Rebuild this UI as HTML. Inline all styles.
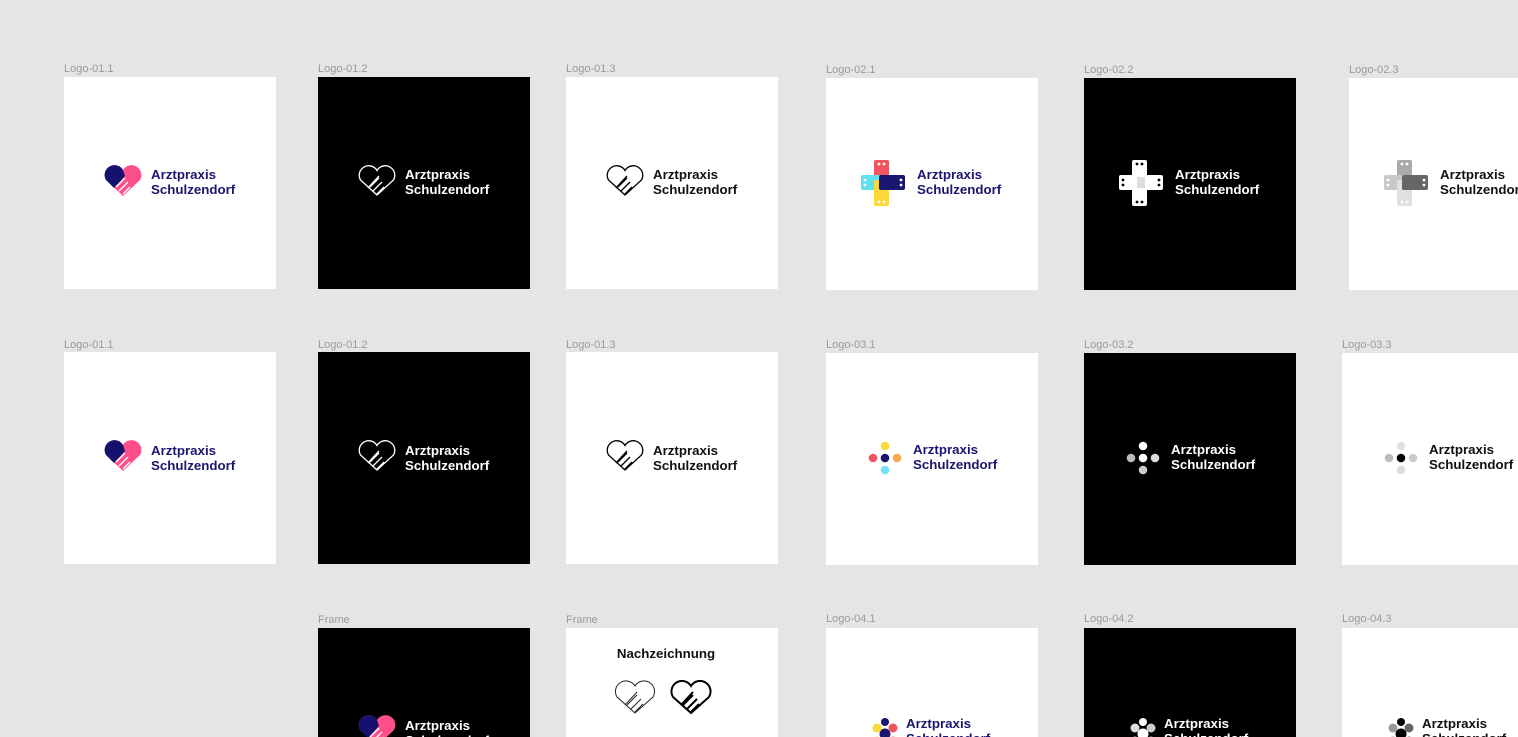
<!DOCTYPE html>
<html><head><meta charset="utf-8"><style>
html,body{margin:0;width:1518px;height:737px;overflow:hidden}
body{background:#e5e5e5;position:relative;font-family:"Liberation Sans",sans-serif}
.c{position:absolute;width:212px;height:212px;background:#fff}
.k{background:#000}
.l{position:absolute;font-size:11px;color:#9a9a9a}
.t{position:absolute;font-weight:bold;font-size:13.3px;line-height:15px;color:#1a1670}
.k .t{color:#fff}
.w .t,.g .t{color:#111}
.i{position:absolute}
</style></head><body>

<div class="l" style="left:64px;top:63px">Logo-01.1</div>
<div class="l" style="left:318px;top:63px">Logo-01.2</div>
<div class="l" style="left:566px;top:63px">Logo-01.3</div>
<div class="l" style="left:826px;top:64px">Logo-02.1</div>
<div class="l" style="left:1084px;top:64px">Logo-02.2</div>
<div class="l" style="left:1349px;top:64px">Logo-02.3</div>

<div class="c" style="left:64px;top:77px">
<svg class="i" style="left:39px;top:88px" width="40" height="32" viewBox="0 0 40 32"><path d="M20 31 L3 15 A8.5 8.5 0 0 1 20 5 A8.5 8.5 0 0 1 37 15 Z" fill="#ff4f8b"/><path d="M20 5 A8.5 8.5 0 0 0 3 15 L11 23 L22 11 Z" fill="#14126e"/><path d="M13 22 l9-9 M16 26 l9-9 M20 29 l7-7" stroke="#fff" stroke-width="1.4"/></svg>
<div class="t" style="left:87px;top:90px">Arztpraxis<br>Schulzendorf</div></div>

<div class="c k" style="left:318px;top:77px">
<svg class="i" style="left:39px;top:88px" width="40" height="32" viewBox="0 0 40 32"><path d="M20 30 L3.5 15 A8.3 8.3 0 0 1 20 5.5 A8.3 8.3 0 0 1 36.5 15 Z M11 23 L22 11 M13 22 l9-9 M16 26 l9-9 M20 29 l7-7" fill="none" stroke="#fff" stroke-width="1.3"/></svg>
<div class="t" style="left:87px;top:90px">Arztpraxis<br>Schulzendorf</div></div>

<div class="c w" style="left:566px;top:77px">
<svg class="i" style="left:39px;top:88px" width="40" height="32" viewBox="0 0 40 32"><path d="M20 30 L3.5 15 A8.3 8.3 0 0 1 20 5.5 A8.3 8.3 0 0 1 36.5 15 Z M11 23 L22 11 M13 22 l9-9 M16 26 l9-9 M20 29 l7-7" fill="none" stroke="#000" stroke-width="1.3"/></svg>
<div class="t" style="left:87px;top:90px">Arztpraxis<br>Schulzendorf</div></div>

<div class="c" style="left:826px;top:78px">
<svg class="i" style="left:35px;top:82px" width="44" height="46" viewBox="0 0 44 46"><rect x="13" y="0" width="15" height="26" rx="2" fill="#f0545f"/><rect x="0" y="15" width="26" height="15" rx="2" fill="#5ee0ee"/><rect x="13" y="20" width="15" height="26" rx="2" fill="#fbd93a"/><rect x="18" y="15" width="26" height="15" rx="2" fill="#1a1670"/><g fill="#fff"><circle cx="18" cy="4" r="1.4"/><circle cx="23" cy="4" r="1.4"/><circle cx="18" cy="42" r="1.4"/><circle cx="23" cy="42" r="1.4"/><circle cx="4" cy="20" r="1.4"/><circle cx="4" cy="25" r="1.4"/><circle cx="40" cy="20" r="1.4"/><circle cx="40" cy="25" r="1.4"/></g></svg>
<div class="t" style="left:91px;top:89px">Arztpraxis<br>Schulzendorf</div></div>

<div class="c k" style="left:1084px;top:78px">
<svg class="i" style="left:35px;top:82px" width="44" height="46" viewBox="0 0 44 46"><rect x="13" y="0" width="15" height="46" rx="2" fill="#fff"/><rect x="0" y="15" width="44" height="15" rx="2" fill="#fff"/><rect x="18" y="17" width="8" height="11" fill="#ddd"/><g fill="#000"><circle cx="18" cy="4" r="1.4"/><circle cx="23" cy="4" r="1.4"/><circle cx="18" cy="42" r="1.4"/><circle cx="23" cy="42" r="1.4"/><circle cx="4" cy="20" r="1.4"/><circle cx="4" cy="25" r="1.4"/><circle cx="40" cy="20" r="1.4"/><circle cx="40" cy="25" r="1.4"/></g></svg>
<div class="t" style="left:91px;top:89px">Arztpraxis<br>Schulzendorf</div></div>

<div class="c g" style="left:1349px;top:78px">
<svg class="i" style="left:35px;top:82px" width="44" height="46" viewBox="0 0 44 46"><rect x="13" y="0" width="15" height="26" rx="2" fill="#aaa"/><rect x="0" y="15" width="26" height="15" rx="2" fill="#c8c8c8"/><rect x="13" y="20" width="15" height="26" rx="2" fill="#e0e0e0"/><rect x="18" y="15" width="26" height="15" rx="2" fill="#666"/><g fill="#fff"><circle cx="18" cy="4" r="1.4"/><circle cx="23" cy="4" r="1.4"/><circle cx="18" cy="42" r="1.4"/><circle cx="23" cy="42" r="1.4"/><circle cx="4" cy="20" r="1.4"/><circle cx="4" cy="25" r="1.4"/><circle cx="40" cy="20" r="1.4"/><circle cx="40" cy="25" r="1.4"/></g></svg>
<div class="t" style="left:91px;top:89px">Arztpraxis<br>Schulzendorf</div></div>

<div class="l" style="left:64px;top:339px">Logo-01.1</div>
<div class="l" style="left:318px;top:339px">Logo-01.2</div>
<div class="l" style="left:566px;top:339px">Logo-01.3</div>
<div class="l" style="left:826px;top:339px">Logo-03.1</div>
<div class="l" style="left:1084px;top:339px">Logo-03.2</div>
<div class="l" style="left:1342px;top:339px">Logo-03.3</div>

<div class="c" style="left:64px;top:352px">
<svg class="i" style="left:39px;top:88px" width="40" height="32" viewBox="0 0 40 32"><path d="M20 31 L3 15 A8.5 8.5 0 0 1 20 5 A8.5 8.5 0 0 1 37 15 Z" fill="#ff4f8b"/><path d="M20 5 A8.5 8.5 0 0 0 3 15 L11 23 L22 11 Z" fill="#14126e"/><path d="M13 22 l9-9 M16 26 l9-9 M20 29 l7-7" stroke="#fff" stroke-width="1.4"/></svg>
<div class="t" style="left:87px;top:91px">Arztpraxis<br>Schulzendorf</div></div>

<div class="c k" style="left:318px;top:352px">
<svg class="i" style="left:39px;top:88px" width="40" height="32" viewBox="0 0 40 32"><path d="M20 30 L3.5 15 A8.3 8.3 0 0 1 20 5.5 A8.3 8.3 0 0 1 36.5 15 Z M11 23 L22 11 M13 22 l9-9 M16 26 l9-9 M20 29 l7-7" fill="none" stroke="#fff" stroke-width="1.3"/></svg>
<div class="t" style="left:87px;top:91px">Arztpraxis<br>Schulzendorf</div></div>

<div class="c w" style="left:566px;top:352px">
<svg class="i" style="left:39px;top:88px" width="40" height="32" viewBox="0 0 40 32"><path d="M20 30 L3.5 15 A8.3 8.3 0 0 1 20 5.5 A8.3 8.3 0 0 1 36.5 15 Z M11 23 L22 11 M13 22 l9-9 M16 26 l9-9 M20 29 l7-7" fill="none" stroke="#000" stroke-width="1.3"/></svg>
<div class="t" style="left:87px;top:91px">Arztpraxis<br>Schulzendorf</div></div>

<div class="c" style="left:826px;top:353px">
<svg class="i" style="left:42px;top:88px" width="34" height="34" viewBox="0 0 34 34"><circle cx="17" cy="5" r="4.3" fill="#fbd93a"/><circle cx="5" cy="17" r="4.3" fill="#f0545f"/><circle cx="17" cy="17" r="4.3" fill="#1a1670"/><circle cx="29" cy="17" r="4.3" fill="#f9a94b"/><circle cx="17" cy="29" r="4.3" fill="#6fe6f3"/></svg>
<div class="t" style="left:87px;top:89px">Arztpraxis<br>Schulzendorf</div></div>

<div class="c k" style="left:1084px;top:353px">
<svg class="i" style="left:42px;top:88px" width="34" height="34" viewBox="0 0 34 34"><circle cx="17" cy="5" r="4.3" fill="#fff"/><circle cx="5" cy="17" r="4.3" fill="#bbb"/><circle cx="17" cy="17" r="4.3" fill="#fff"/><circle cx="29" cy="17" r="4.3" fill="#ddd"/><circle cx="17" cy="29" r="4.3" fill="#ccc"/></svg>
<div class="t" style="left:87px;top:89px">Arztpraxis<br>Schulzendorf</div></div>

<div class="c g" style="left:1342px;top:353px">
<svg class="i" style="left:42px;top:88px" width="34" height="34" viewBox="0 0 34 34"><circle cx="17" cy="5" r="4.3" fill="#e2e2e2"/><circle cx="5" cy="17" r="4.3" fill="#bbb"/><circle cx="17" cy="17" r="4.3" fill="#000"/><circle cx="29" cy="17" r="4.3" fill="#ccc"/><circle cx="17" cy="29" r="4.3" fill="#ddd"/></svg>
<div class="t" style="left:87px;top:89px">Arztpraxis<br>Schulzendorf</div></div>

<div class="l" style="left:318px;top:614px">Frame</div>
<div class="l" style="left:566px;top:614px">Frame</div>
<div class="l" style="left:826px;top:613px">Logo-04.1</div>
<div class="l" style="left:1084px;top:613px">Logo-04.2</div>
<div class="l" style="left:1342px;top:613px">Logo-04.3</div>

<div class="c k" style="left:318px;top:628px">
<svg class="i" style="left:39px;top:87px" width="40" height="32" viewBox="0 0 40 32"><path d="M20 31 L3 15 A8.5 8.5 0 0 1 20 5 A8.5 8.5 0 0 1 37 15 Z" fill="#ff4f8b"/><path d="M20 5 A8.5 8.5 0 0 0 3 15 L11 23 L22 11 Z" fill="#14126e"/><path d="M13 22 l9-9 M16 26 l9-9 M20 29 l7-7" stroke="#fff" stroke-width="1.4"/></svg>
<div class="t" style="left:87px;top:90px">Arztpraxis<br>Schulzendorf</div></div>

<div class="c w" style="left:566px;top:628px">
<div class="t" style="left:0;width:200px;text-align:center;top:18px">Nachzeichnung</div>
<svg class="i" style="left:47px;top:52px" width="44" height="36" viewBox="0 0 44 36"><path d="M22 33 L4 17 A9.3 9.3 0 0 1 22 6 A9.3 9.3 0 0 1 40 17 Z M12 25 L24 12 M14 25 l10-10 M18 29 l10-10 M22 32 l8-8" fill="none" stroke="#222" stroke-width="1"/></svg>
<svg class="i" style="left:103px;top:52px" width="44" height="36" viewBox="0 0 44 36"><path d="M22 33 L4 17 A9.3 9.3 0 0 1 22 6 A9.3 9.3 0 0 1 40 17 Z M12 25 L24 12 M14 25 l10-10 M18 29 l10-10 M22 32 l8-8" fill="none" stroke="#000" stroke-width="2"/></svg>
</div>

<div class="c" style="left:826px;top:628px">
<svg class="i" style="left:46px;top:89px" width="26" height="30" viewBox="0 0 26 30"><circle cx="13" cy="5" r="4" fill="#1a1670"/><circle cx="5" cy="11" r="4.5" fill="#fbd93a"/><circle cx="21" cy="11" r="4.5" fill="#f0545f"/><circle cx="13" cy="17" r="5.5" fill="#1a1670"/><circle cx="5" cy="24" r="4.5" fill="#fbd93a"/><circle cx="21" cy="24" r="4.5" fill="#f0545f"/></svg>
<div class="t" style="left:80px;top:88px">Arztpraxis<br>Schulzendorf</div></div>

<div class="c k" style="left:1084px;top:628px">
<svg class="i" style="left:46px;top:89px" width="26" height="30" viewBox="0 0 26 30"><circle cx="13" cy="5" r="4" fill="#fff"/><circle cx="5" cy="11" r="4.5" fill="#ddd"/><circle cx="21" cy="11" r="4.5" fill="#ccc"/><circle cx="13" cy="17" r="5.5" fill="#fff"/><circle cx="5" cy="24" r="4.5" fill="#ddd"/><circle cx="21" cy="24" r="4.5" fill="#ccc"/></svg>
<div class="t" style="left:80px;top:88px">Arztpraxis<br>Schulzendorf</div></div>

<div class="c g" style="left:1342px;top:628px">
<svg class="i" style="left:46px;top:89px" width="26" height="30" viewBox="0 0 26 30"><circle cx="13" cy="5" r="4" fill="#000"/><circle cx="5" cy="11" r="4.5" fill="#999"/><circle cx="21" cy="11" r="4.5" fill="#666"/><circle cx="13" cy="17" r="5.5" fill="#000"/><circle cx="5" cy="24" r="4.5" fill="#999"/><circle cx="21" cy="24" r="4.5" fill="#666"/></svg>
<div class="t" style="left:80px;top:88px">Arztpraxis<br>Schulzendorf</div></div>

</body></html>
